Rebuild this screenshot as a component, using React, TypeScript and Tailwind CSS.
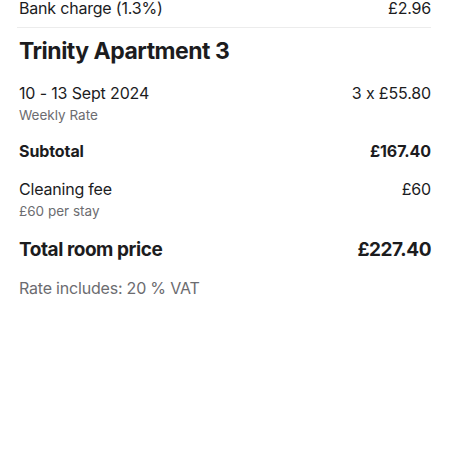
export default function App() {
  return (
    <div className="min-h-[450px] w-[450px] bg-white px-[19px] text-[#1c1c1e]" style={{ fontFamily: "Inter, 'Noto Sans', sans-serif" }}>
      <div className="flex items-center justify-between pb-[11px] text-[16px] leading-[16px] tracking-[-0.2px]">
        <span>Bank charge (1.3%)</span>
        <span>£2.96</span>
      </div>
      <div className="-ml-[2px] h-px bg-[#ececec]" />
      <h1 className="mt-[9px] text-[23px] font-bold leading-[28px] tracking-[-0.5px]">Trinity Apartment 3</h1>

      <div className="mt-[18px] flex justify-between text-[16px] leading-[20px] tracking-[-0.15px]">
        <div className="flex flex-col">
          <span>10 - 13 Sept 2024</span>
          <span className="mt-[4px] text-[13.5px] leading-[16px] tracking-normal text-[#6c6c70]">Weekly Rate</span>
        </div>
        <span>3 x £55.80</span>
      </div>

      <div className="mt-[18px] flex justify-between text-[16px] font-bold leading-[20px] tracking-[-0.1px]">
        <span>Subtotal</span>
        <span>£167.40</span>
      </div>

      <div className="mt-[18px] flex justify-between text-[16px] leading-[20px] tracking-[-0.2px]">
        <div className="flex flex-col">
          <span>Cleaning fee</span>
          <span className="mt-[4px] text-[13.5px] leading-[16px] tracking-normal text-[#6c6c70]">£60 per stay</span>
        </div>
        <span>£60</span>
      </div>

      <div className="mt-[19px] flex justify-between text-[19px] font-bold leading-[23px] tracking-[-0.45px]">
        <span>Total room price</span>
        <span>£227.40</span>
      </div>

      <p className="mt-[17px] text-[16px] leading-[20px] tracking-[-0.2px] text-[#6c6c70]">Rate includes: 20 % VAT</p>
    </div>
  );
}
